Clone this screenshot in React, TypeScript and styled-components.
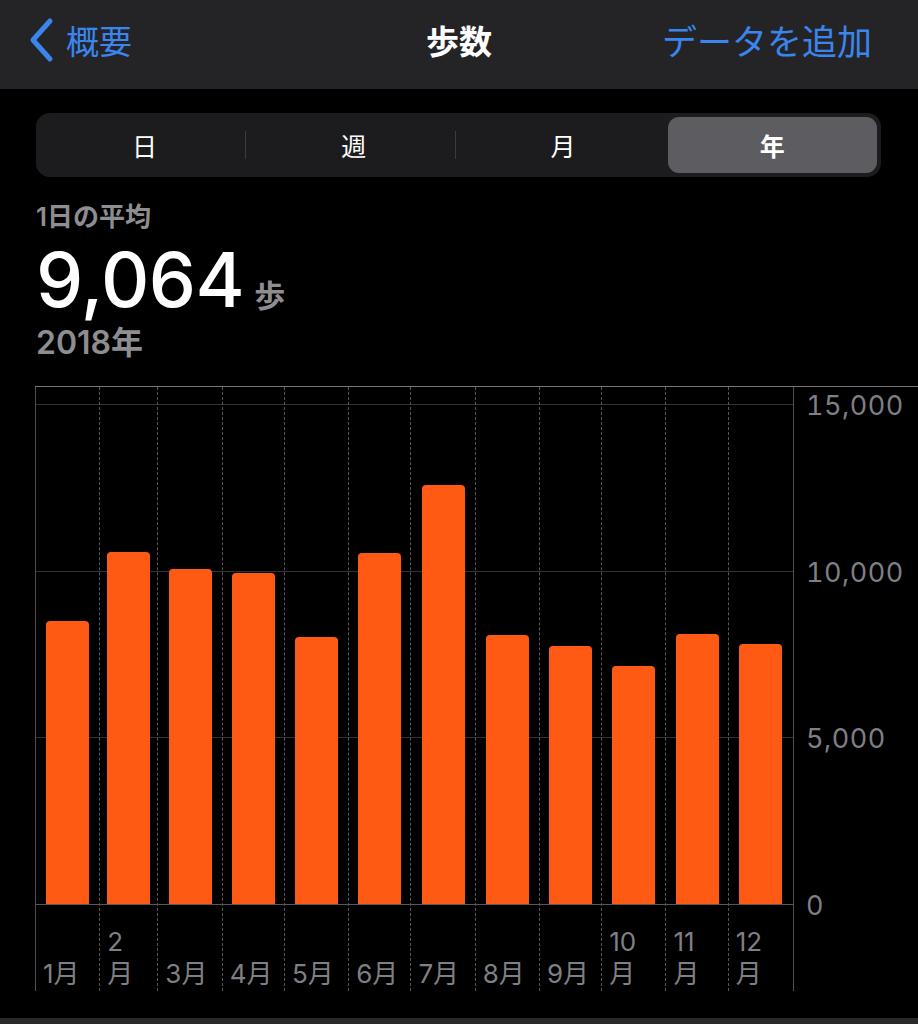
import React from "react";
import styled, { createGlobalStyle } from "styled-components";

interface Month {
    days: number;
    value: number;
    label: string[];
}

const months: Month[] = [
    { days: 31, value: 8500, label: ["1月"] },
    { days: 28, value: 10570, label: ["2", "月"] },
    { days: 31, value: 10060, label: ["3月"] },
    { days: 30, value: 9940, label: ["4月"] },
    { days: 31, value: 8020, label: ["5月"] },
    { days: 30, value: 10540, label: ["6月"] },
    { days: 31, value: 12580, label: ["7月"] },
    { days: 31, value: 8080, label: ["8月"] },
    { days: 30, value: 7750, label: ["9月"] },
    { days: 31, value: 7150, label: ["10", "月"] },
    { days: 30, value: 8110, label: ["11", "月"] },
    { days: 31, value: 7810, label: ["12", "月"] },
];

const segments = ["日", "週", "月", "年"];
const axis = ["15,000", "10,000", "5,000", "0"];

const MAX = 15000;
const PLOT_H = 500;
const CHART_H = 604;

const GlobalStyle = createGlobalStyle`
    html, body {
        margin: 0;
        padding: 0;
        background: #000;
    }
    body {
        font-family: Inter, "Noto Sans CJK JP", sans-serif;
        -webkit-font-smoothing: antialiased;
    }
`;

const App = () => {
    return (
        <>
            <GlobalStyle />
            <Screen>
                <NavBar>
                    <BackLink>
                        <svg width="26" height="46" viewBox="0 0 26 46">
                            <polyline points="22,4 5,23 22,42" fill="none" stroke="#3a86ee" strokeWidth="5" strokeLinecap="round" strokeLinejoin="round" />
                        </svg>
                        <span>概要</span>
                    </BackLink>
                    <NavTitle>歩数</NavTitle>
                    <NavAction>データを追加</NavAction>
                </NavBar>

                <Content>
                    <Segmented>
                        {segments.map((s, i) => (
                            <Segment key={s} active={i === 3} divider={i > 0 && i < 3}>
                                {s}
                            </Segment>
                        ))}
                    </Segmented>

                    <Stats>
                        <StatCaption>1日の平均</StatCaption>
                        <StatValue>
                            9,064<Unit>歩</Unit>
                        </StatValue>
                        <StatPeriod>2018年</StatPeriod>
                    </Stats>
                </Content>

                <Chart>
                    <Plot cols={months.map((m) => `${m.days}fr`).join(" ")}>
                        {months.map((m, i) => (
                            <MonthCol key={i} last={i === months.length - 1}>
                                <BarArea>
                                    <Bar style={{ height: `${(m.value / MAX) * PLOT_H}px` }} />
                                </BarArea>
                                <MonthLabel>
                                    {m.label.map((l) => (
                                        <span key={l}>{l}</span>
                                    ))}
                                </MonthLabel>
                            </MonthCol>
                        ))}
                    </Plot>
                    <Axis>
                        {axis.map((a) => (
                            <AxisLabel key={a}>{a}</AxisLabel>
                        ))}
                    </Axis>
                </Chart>

                <TabEdge />
            </Screen>
        </>
    );
};
export default App;

const Screen = styled.div`
    display: flex;
    flex-direction: column;
    width: 918px;
    height: 1024px;
    background: #000;
    overflow: hidden;
`;

const NavBar = styled.div`
    flex: none;
    display: grid;
    grid-template-columns: 1fr auto 1fr;
    align-items: center;
    height: 89px;
    padding: 0 28px;
    background: #242426;
    box-sizing: border-box;
`;

const BackLink = styled.div`
    display: flex;
    align-items: center;
    gap: 12px;
    color: #3a86ee;
    font-size: 33px;
    margin-top: -10px;
`;

const NavTitle = styled.div`
    color: #fff;
    font-size: 33px;
    font-weight: 700;
    margin-top: -10px;
`;

const NavAction = styled.div`
    justify-self: end;
    padding-right: 18px;
    color: #3a86ee;
    font-size: 35px;
    margin-top: -10px;
`;

const Content = styled.div`
    flex: none;
    display: flex;
    flex-direction: column;
    padding: 24px 37px 0 36px;
`;

const Segmented = styled.div`
    display: grid;
    grid-template-columns: repeat(4, 1fr);
    height: 64px;
    padding: 4px;
    box-sizing: border-box;
    border-radius: 14px;
    background: #1c1c1e;
`;

const Segment = styled.div<{ active: boolean; divider: boolean }>`
    position: relative;
    display: flex;
    align-items: center;
    justify-content: center;
    border-radius: 11px;
    background: ${({ active }) => (active ? "#5d5d61" : "transparent")};
    color: #fff;
    font-size: 25px;
    font-weight: ${({ active }) => (active ? 700 : 400)};
    &::before {
        content: "";
        display: ${({ divider }) => (divider ? "block" : "none")};
        position: absolute;
        left: -4px;
        top: 14px;
        bottom: 14px;
        width: 1px;
        background: #3c3c40;
    }
`;

const Stats = styled.div`
    display: flex;
    flex-direction: column;
    margin-top: 24px;
`;

const StatCaption = styled.div`
    color: #8d8d92;
    font-size: 26px;
    font-weight: 600;
    line-height: 32px;
    height: 34px;
`;

const StatValue = styled.div`
    color: #fff;
    font-size: 75px;
    font-weight: 500;
    line-height: 89px;
    height: 89px;
    letter-spacing: -0.5px;
    white-space: nowrap;
`;

const Unit = styled.span`
    margin-left: 10px;
    color: #8d8d92;
    font-size: 31px;
    font-weight: 600;
    line-height: 1;
    letter-spacing: 0;
`;

const StatPeriod = styled.div`
    color: #8d8d92;
    font-size: 32px;
    font-weight: 600;
    line-height: 38px;
    height: 38px;
`;

const Chart = styled.div`
    flex: none;
    display: grid;
    grid-template-columns: 758px 1fr;
    grid-template-rows: ${CHART_H}px;
    margin: 24px 0 0 35px;
    border-top: 1px solid #76767a;
    height: ${CHART_H}px;
`;

const Plot = styled.div<{ cols: string }>`
    display: grid;
    grid-template-columns: ${({ cols }) => cols};
    border-left: 1px solid #4e4e50;
    background:
        linear-gradient(#323234, #323234) 0 17px / 100% 1px no-repeat,
        linear-gradient(#323234, #323234) 0 184px / 100% 1px no-repeat,
        linear-gradient(#323234, #323234) 0 350px / 100% 1px no-repeat,
        linear-gradient(#58585a, #58585a) 0 517px / 100% 1px no-repeat;
`;

const MonthCol = styled.div<{ last: boolean }>`
    display: grid;
    grid-template-rows: 17px ${PLOT_H}px 1fr;
    border-right: ${({ last }) => (last ? "none" : "1px dashed #58585c")};
    min-width: 0;
`;

const BarArea = styled.div`
    grid-row: 2;
    display: flex;
    align-items: flex-end;
    justify-content: center;
`;

const Bar = styled.div`
    width: 43px;
    background: #ff5a14;
    border-radius: 4px 4px 0 0;
`;

const MonthLabel = styled.div`
    grid-row: 3;
    display: flex;
    flex-direction: column;
    justify-content: flex-end;
    padding: 0 0 1px 7px;
    color: #7f7f84;
    font-size: 26px;
    line-height: 32px;
    white-space: nowrap;
    span {
        display: block;
    }
`;

const Axis = styled.div`
    display: flex;
    flex-direction: column;
    padding: 4px 0 0 12px;
    border-left: 1px solid #4e4e50;
    overflow: hidden;
`;

const AxisLabel = styled.div`
    height: 166.5px;
    flex: none;
    color: #7f7f84;
    font-size: 27px;
    line-height: 30px;
    letter-spacing: 0.5px;
    font-variant-numeric: tabular-nums;
    &:last-child {
        height: auto;
    }
`;

const TabEdge = styled.div`
    margin-top: auto;
    height: 6px;
    background: #2a2a2c;
`;
